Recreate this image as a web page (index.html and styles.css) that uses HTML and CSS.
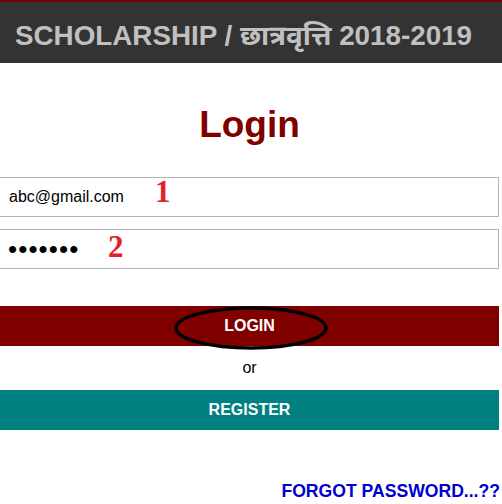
FILE: index.html
```html
<!DOCTYPE html>
<html lang="en">
<head>
<meta charset="utf-8">
<title>Scholarship Login</title>
<link rel="stylesheet" href="styles.css">
</head>
<body>
<header class="topbar">
  <h1 class="topbar-title">SCHOLARSHIP / छात्रवृत्ति 2018-2019</h1>
</header>
<main class="login">
  <h2 class="login-title">Login</h2>
  <div class="field">
    <input class="field-input" type="text" value="abc@gmail.com">
    <span class="mark mark-one">1</span>
  </div>
  <div class="field field-second">
    <input class="field-input field-password" type="password" value="abcdefg">
    <span class="mark mark-two">2</span>
  </div>
  <div class="btn-wrap">
    <button class="btn btn-login" type="button">LOGIN</button>
    <svg class="circle-mark" width="160" height="50" viewBox="0 0 160 50" aria-hidden="true">
      <ellipse cx="80" cy="25" rx="75" ry="20" fill="none" stroke="#000" stroke-width="3.5"/>
    </svg>
  </div>
  <p class="or">or</p>
  <button class="btn btn-register" type="button">REGISTER</button>
  <p class="forgot"><a class="forgot-link" href="#">FORGOT PASSWORD...??</a></p>
</main>
</body>
</html>
```
FILE: styles.css
```css
* { box-sizing: border-box; }
html, body { margin: 0; padding: 0; background: #fff; }
body {
  font-family: "Liberation Sans", Arial, sans-serif;
  width: 502px;
  overflow: hidden;
}
.topbar {
  border-top: 2px solid #7a0000;
  background: #333333;
  height: 63px;
  padding: 18px 0 0 15px;
}
.topbar-title {
  margin: 0;
  font-size: 27.8px;
  line-height: 32px;
  font-weight: bold;
  color: #c0c0c0;
  font-family: "Liberation Sans", "Noto Sans Devanagari", "Noto Sans", Arial, sans-serif;
  white-space: nowrap;
}
.login {
  width: 499px;
  display: flex;
  flex-direction: column;
}
.login-title {
  margin: 41px 0 31px;
  text-align: center;
  font-size: 37px;
  line-height: 42px;
  font-weight: bold;
  color: #800000;
}
.field { position: relative; }
.field-second { margin-top: 12px; }
.field-input {
  display: block;
  margin: 0 0 0 -1px;
  width: 500px;
  height: 40px;
  border: 1px solid #b4b4b4;
  padding: 0 0 0 9px;
  font-family: "Liberation Sans", Arial, sans-serif;
  font-size: 16px;
  color: #000;
  background: #fff;
  outline: none;
}
.field-password {
  font-size: 26px;
  letter-spacing: 1.1px;
  padding-left: 8px;
}
.mark {
  position: absolute;
  font-family: "Liberation Serif", "Times New Roman", serif;
  font-weight: bold;
  font-size: 31px;
  line-height: 1;
  color: #e3202c;
}
.mark-one { left: 155px; top: -1px; }
.mark-two { left: 108px; top: 2px; }
.btn-wrap {
  position: relative;
  margin-top: 37px;
}
.btn {
  display: block;
  width: 499px;
  height: 40px;
  border: none;
  margin: 0;
  padding: 0;
  font-family: "Liberation Sans", Arial, sans-serif;
  font-size: 16px;
  font-weight: bold;
  color: #fff;
  cursor: pointer;
}
.btn-login { background: #800000; }
.btn-register { background: #008080; }
.circle-mark {
  position: absolute;
  left: 171px;
  top: -3px;
}
.or {
  margin: 0;
  height: 44px;
  line-height: 44px;
  text-align: center;
  font-size: 16px;
  color: #000;
}
.forgot {
  margin: 51px 0 0;
  width: 502px;
  text-align: right;
  padding-right: 2px;
  font-size: 17.6px;
  line-height: 20px;
  font-weight: bold;
}
.forgot-link {
  color: #0000cc;
  text-decoration: none;
}
```
